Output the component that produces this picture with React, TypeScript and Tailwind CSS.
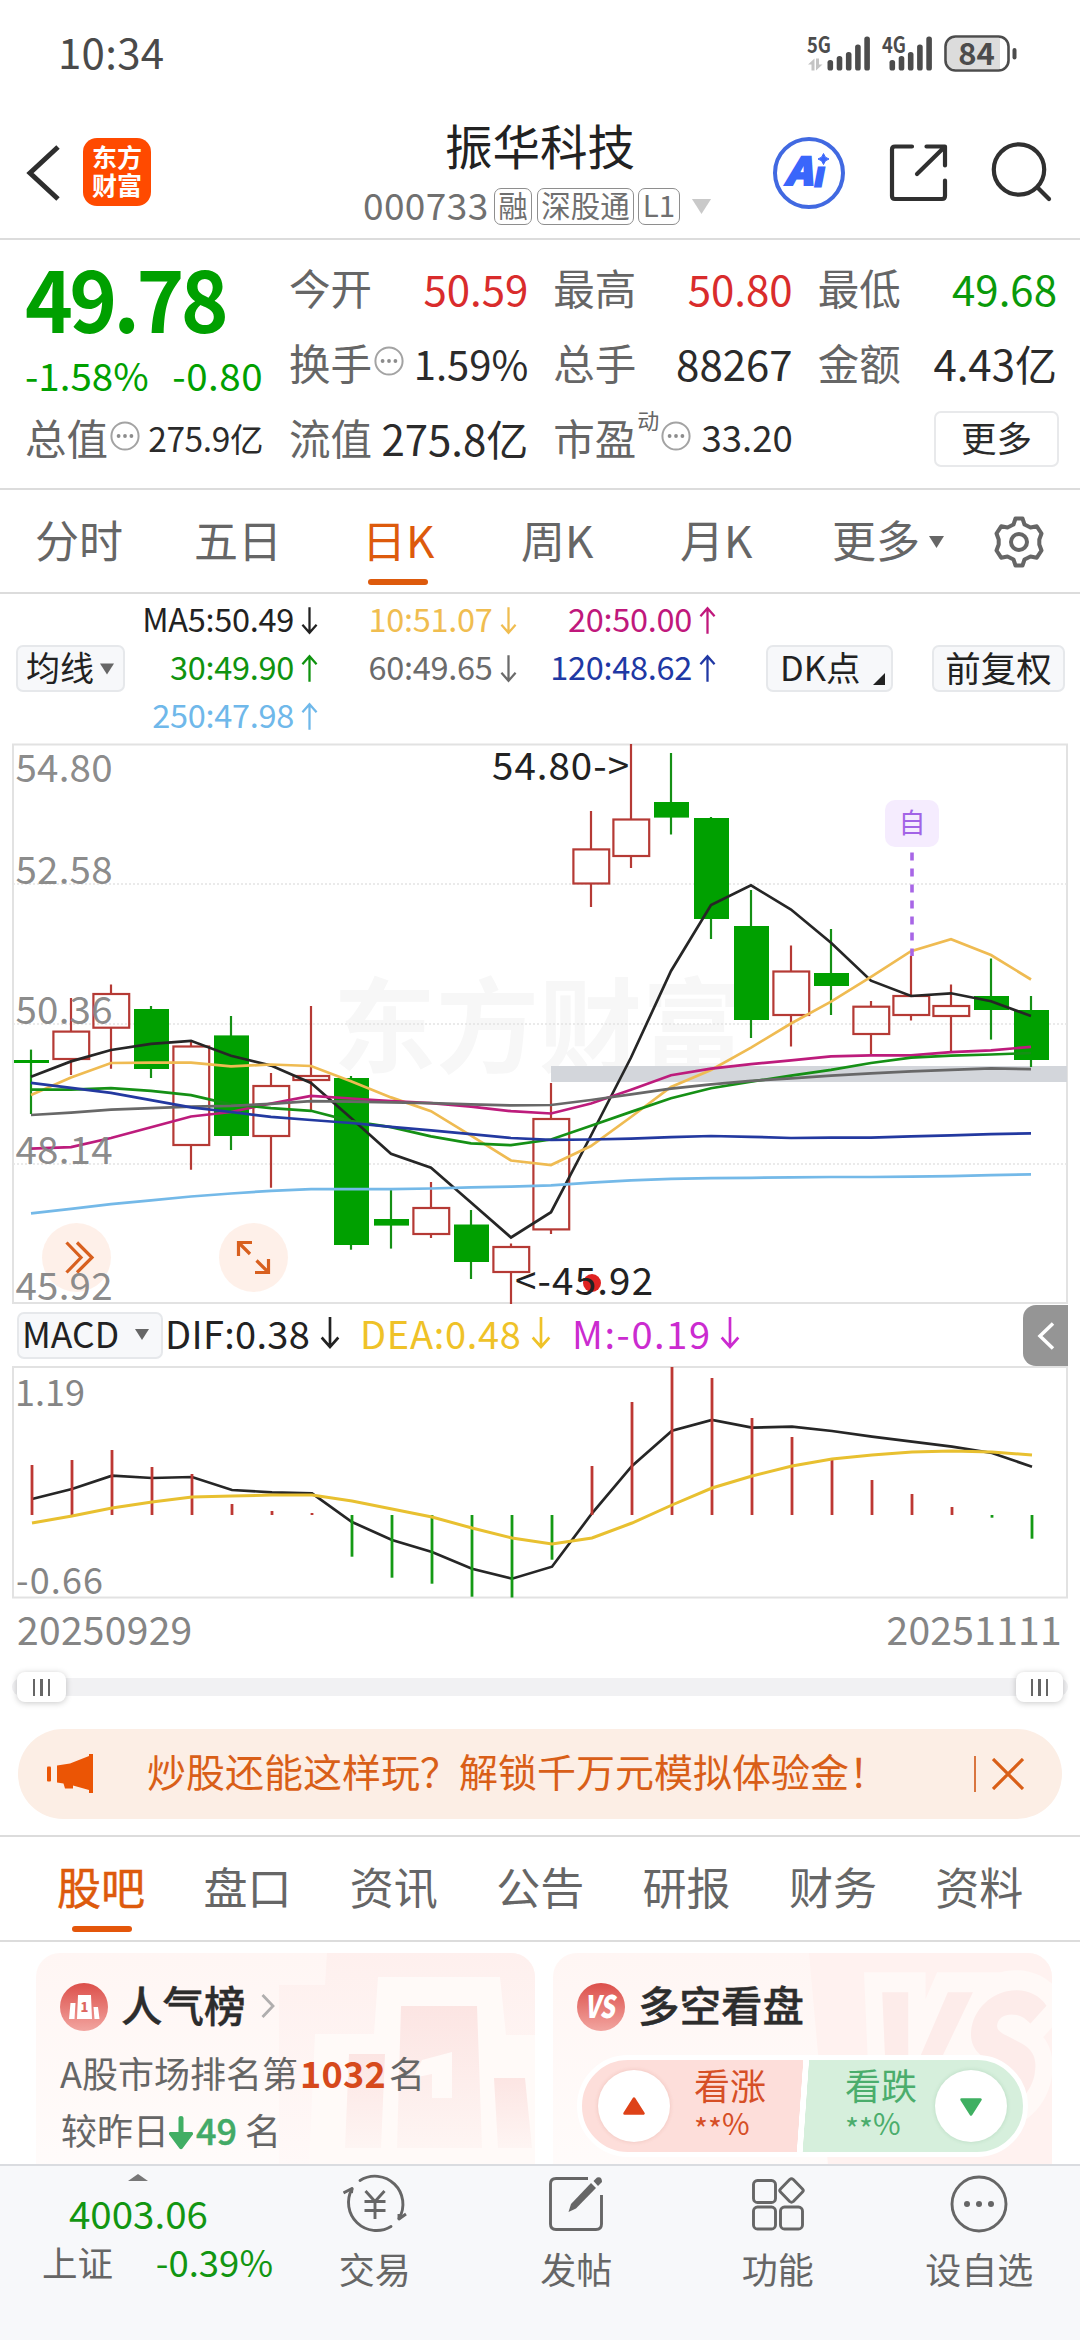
import React from "react";

const CJK = 'font-["Noto_Sans_CJK_SC",sans-serif]';

/* ---------- small shared pieces ---------- */

function Arrow({ dir, className = "" }: { dir: "up" | "down"; className?: string }) {
  return (
    <svg viewBox="0 0 18 30" className={`shrink-0 ${className}`} fill="none" stroke="currentColor" strokeWidth="2.4">
      {dir === "down" ? <path d="M9 1V28M1.5 19.5L9 28l7.5-8.5" /> : <path d="M9 29V2M1.5 10.5L9 2l7.5 8.5" />}
    </svg>
  );
}

function InfoDot({ className = "" }: { className?: string }) {
  return (
    <svg viewBox="0 0 30 30" className={`size-[30px] shrink-0 ${className}`} fill="none">
      <circle cx="15" cy="15" r="13.6" stroke="#a3a3a3" strokeWidth="2" />
      <circle cx="8.6" cy="15" r="1.9" fill="#8c8c8c" />
      <circle cx="15" cy="15" r="1.9" fill="#8c8c8c" />
      <circle cx="21.4" cy="15" r="1.9" fill="#8c8c8c" />
    </svg>
  );
}

function Caret({ className = "" }: { className?: string }) {
  return (
    <svg viewBox="0 0 14 11" className={`shrink-0 ${className}`}>
      <path d="M0 0H14L7 11Z" fill="currentColor" />
    </svg>
  );
}

/* ---------- status bar ---------- */

function Signal({ label, data }: { label: string; data?: boolean }) {
  const tops = [24, 20, 16, 8.5, 0.5];
  return (
    <svg viewBox="0 0 64 37" className="h-[37px] w-[64px] overflow-visible">
      {data && (
        <g fill="#c4c4c4">
          <path d="M0 28.5L6.5 22.500V34.500H3.500V28.500Z" />
          <path d="M14.500 28.500L8 34.500V22.500H11V28.500Z" />
        </g>
      )}
      {tops.map((t, i) => (
        <rect key={i} x={(data ? 19.5 : 6.5) + i * 9.2} y={t} width="5.600" height={34.5 - t} rx="2.6" fill="#4c4c4c" />
      ))}
      <text
        x="-1"
        y="17"
        fontSize="22"
        fontWeight="700"
        textLength="24"
        lengthAdjust="spacingAndGlyphs"
        fill="#4c4c4c"
        stroke="#fff"
        strokeWidth="3"
        paintOrder="stroke"
      >
        {label}
      </text>
    </svg>
  );
}

function StatusBar() {
  return (
    <div className="flex h-[110px] items-start text-[#4a4a4a]">
      <div className="mt-[30px] ml-[58px] text-[42px] leading-[42px] tracking-[0.300px]">10:34</div>
      <div className="mt-[36px] ml-auto flex w-[272px]">
        <div className="w-[75px]">
          <Signal label="5G" data />
        </div>
        <div className="w-[61px]">
          <Signal label="4G" />
        </div>
        <svg viewBox="0 0 74 38" className="mt-[-1px] h-[38px] w-[74px] overflow-visible">
          <rect x="1.500" y="1.500" width="63" height="34" rx="10" fill="#fff" />
          <path d="M11 3H56V34H11A8 8 0 0 1 3 26V11A8 8 0 0 1 11 3Z" fill="#dcdcdc" />
          <rect x="1.500" y="1.500" width="63" height="34" rx="10" fill="none" stroke="#4c4c4c" strokeWidth="2.600" />
          <rect x="68.500" y="13" width="4" height="11.500" rx="2" fill="#4c4c4c" />
          <text x="32.500" y="30" fontSize="31" fontWeight="700" textAnchor="middle" fill="#4c4c4c">
            84
          </text>
        </svg>
      </div>
    </div>
  );
}

/* ---------- header ---------- */

function Tag({ children, className }: { children: React.ReactNode; className: string }) {
  return (
    <span
      className={`flex h-[37px] items-center justify-center rounded-[7px] border-[1.5px] border-[#8e8e8e] pb-[4px] text-[29.500px] leading-none whitespace-nowrap ${className}`}
    >
      {children}
    </span>
  );
}

function Header() {
  return (
    <header className="flex h-[130px] border-b-2 border-[#dcdcdc]">
      <svg viewBox="0 0 34 56" className="mt-[35px] ml-[26px] h-[56px] w-[34px]" fill="none" stroke="#2e2e2e" strokeWidth="5">
        <path d="M32 2L4 28L32 54" />
      </svg>
      <div className="mt-[28px] ml-[23px] flex h-[68px] w-[68px] flex-col items-center justify-center rounded-[14px] bg-[#ff4a00] pb-[4px] text-[25px] leading-[28px] font-bold text-white">
        <span>东方</span>
        <span>财富</span>
      </div>
      <div className="ml-[212px] w-[350px]">
        <h1 className="mt-[9px] ml-[82px] text-[47.500px] leading-[52px] whitespace-nowrap text-[#222]">振华科技</h1>
        <div className="mt-[17px] flex h-[37px] items-center text-[#707070]">
          <span className="w-[131px] pb-[5px] text-[37px] leading-[32px] tracking-[0.400px]">000733</span>
          <Tag className="w-[38px]">融</Tag>
          <Tag className="ml-[5px] w-[97px]">深股通</Tag>
          <Tag className="ml-[4px] w-[42px]">L1</Tag>
          <Caret className="ml-[10px] h-[15px] w-[23px] text-[#c9c9c9]" />
        </div>
      </div>
      <svg viewBox="0 0 74 74" className="mt-[26px] ml-[59px] size-[74px] overflow-visible">
        <circle cx="37" cy="37" r="34" fill="none" stroke="#4169e1" strokeWidth="4" />
        <text x="13" y="49" fontSize="38" fontWeight="900" fontStyle="italic" textLength="27" lengthAdjust="spacingAndGlyphs" fill="#3a66fb" stroke="#3a66fb" strokeWidth="2">
          A
        </text>
        <text x="43" y="50" fontSize="34" fontWeight="900" fontStyle="italic" fill="#3a66fb" stroke="#3a66fb" strokeWidth="3">
          ı
        </text>
        <path d="M51.500 17.500Q52.500 22 57 23Q52.500 24 51.500 28.500Q50.500 24 46 23Q50.500 22 51.500 17.500Z" fill="#3a66fb" stroke="#3a66fb" />
      </svg>
      <svg
        viewBox="0 0 60 60"
        className="mt-[33px] ml-[42px] size-[60px]"
        fill="none"
        stroke="#303030"
        strokeWidth="4.200"
        strokeLinecap="round"
        strokeLinejoin="round"
      >
        <path d="M24 3.500H7Q4 3.500 4 6.500V53Q4 56 7 56H54Q57 56 57 53V37.500M38.500 3.500H57V22.500M56 4.500L29 31" />
      </svg>
      <svg viewBox="0 0 62 62" className="mt-[31px] ml-[43px] size-[62px]" fill="none" stroke="#303030" strokeWidth="4.200" strokeLinecap="round">
        <circle cx="28" cy="28.500" r="25.200" />
        <path d="M46.500 46.500L58 58" />
      </svg>
    </header>
  );
}

/* ---------- quote ---------- */

function Cell({ label, value, color = "text-[#2b2b2b]", size = "text-[42px]", info }: { label: string; value: string; color?: string; size?: string; info?: boolean }) {
  return (
    <div className="flex h-[75px] items-center">
      <span className="text-[41.500px] leading-none text-[#666]">{label}</span>
      {info && <InfoDot className="ml-[2px] mb-[3px]" />}
      <span className={`ml-auto leading-none ${size} ${color}`}>{value}</span>
    </div>
  );
}

function Quote() {
  return (
    <section className="flex h-[250px] border-b-2 border-[#dcdcdc]">
      <div className="ml-[25px] w-[238px] text-[#00a000]">
        <div className="flex h-[111px] origin-left scale-x-[0.944] items-center text-[86px] leading-none font-bold tracking-[-3.800px]">49.78</div>
        <div className="flex h-[47px] items-center justify-between text-[38.500px] leading-none">
          <span>-1.58%</span>
          <span className="tracking-[0.500px]">-0.80</span>
        </div>
        <div className="mt-[2px] flex h-[75px] items-center text-[#2b2b2b]">
          <span className="text-[41.500px] leading-none text-[#666]">总值</span>
          <InfoDot className="mb-[3px] ml-[2px]" />
          <span className="ml-auto text-[33.500px] leading-none tracking-[-0.400px]">275.9亿</span>
        </div>
      </div>
      <div className="ml-[26px] grid w-[768px] grid-cols-3 content-start gap-x-[25px] pt-[10px]">
        <Cell label="今开" value="50.59" color="text-[#d92c2c]" />
        <Cell label="最高" value="50.80" color="text-[#d92c2c]" />
        <Cell label="最低" value="49.68" color="text-[#0a9a0a]" />
        <Cell label="换手" value="1.59%" size="text-[40px]" info />
        <Cell label="总手" value="88267" />
        <Cell label="金额" value="4.43亿" />
        <Cell label="流值" value="275.8亿" />
        <div className="flex h-[75px] items-center">
          <span className="text-[41.500px] leading-none text-[#666]">市盈</span>
          <span className="mb-[38px] ml-px text-[22px] leading-none text-[#666]">动</span>
          <InfoDot className="mb-[3px] ml-[2px]" />
          <span className="ml-auto text-[36.500px] leading-none text-[#2b2b2b]">33.20</span>
        </div>
        <div className="flex h-[75px] items-center justify-end">
          <button className="mt-[2px] mr-[-2px] flex h-[56px] w-[125px] items-center justify-center rounded-[7px] border-2 border-[#e8e9eb] pb-[4px] text-[35.500px] leading-none text-[#2b2b2b]">更多</button>
        </div>
      </div>
    </section>
  );
}

/* ---------- period tabs ---------- */

function PeriodTabs() {
  return (
    <nav className="flex h-[104px] border-b-2 border-[#dcdcdc] text-[44px] leading-[98px] whitespace-nowrap text-[#666]">
      <span className="ml-[35px] w-[159px]">分时</span>
      <span className="w-[168px]">五日</span>
      <span className="flex w-[159px] flex-col text-[#dd5a0c]">
        <span className="h-[89px]">日K</span>
        <span className="ml-[6px] h-[6px] w-[60px] rounded-full bg-[#dd5a0c]" />
      </span>
      <span className="w-[159px]">周K</span>
      <span className="w-[152px]">月K</span>
      <span className="flex w-[161px]">
        更多
        <Caret className="mt-[46px] ml-[9px] h-[12px] w-[15px]" />
      </span>
      <svg viewBox="0 0 52 52" className="mt-[26px] size-[52px]" fill="none" stroke="#666" strokeWidth="4" strokeLinejoin="round">
        <path d="M22.500 2.500H29.500L31.500 8.500L37.500 11.500L43.800 10.300L48.500 17.500L46.300 23.500V28.500L48.500 34.500L43.800 41.700L37.500 40.500L31.500 43.500L29.500 49.500H22.500L20.500 43.500L14.500 40.500L8.200 41.700L3.500 34.500L5.700 28.500V23.500L3.500 17.500L8.200 10.300L14.500 11.500L20.500 8.500Z" />
        <circle cx="26" cy="26" r="8" />
      </svg>
    </nav>
  );
}

/* ---------- moving average legend ---------- */

function Ma({ text, dir, color }: { text: string; dir: "up" | "down"; color: string }) {
  return (
    <div className={`flex h-[48px] items-center justify-end ${color}`}>
      <span className="pb-[6px] text-[32.500px] leading-none tracking-[-0.300px] whitespace-nowrap">{text}</span>
      <Arrow dir={dir} className="mb-[2px] ml-[7px] h-[29px] w-[17px]" />
    </div>
  );
}

function MaLegend() {
  const box = "flex h-[47px] items-center rounded-[7px] border-2 border-[#e6e8eb] bg-[#f7f8fa] pb-[4px] leading-none whitespace-nowrap text-[#222]";
  return (
    <section className="flex h-[150px]">
      <div className={`mt-[51px] ml-[16px] w-[109px] pl-[8px] text-[34px] ${box}`}>
        均线
        <Caret className="mt-[4px] ml-[6px] h-[12px] w-[14px] text-[#666]" />
      </div>
      <div className="mt-[3px] grid w-[591px] grid-cols-[193px_198.500px_199.500px] content-start">
        <Ma text="MA5:50.49" dir="down" color="text-[#222]" />
        <Ma text="10:51.07" dir="down" color="text-[#f0bd50]" />
        <Ma text="20:50.00" dir="up" color="text-[#c0187c]" />
        <Ma text="30:49.90" dir="up" color="text-[#0f930f]" />
        <Ma text="60:49.65" dir="down" color="text-[#6b6b6b]" />
        <Ma text="120:48.62" dir="up" color="text-[#2038a4]" />
        <Ma text="250:47.98" dir="up" color="text-[#6fb8ea]" />
      </div>
      <div className={`mt-[51px] ml-[50px] w-[127px] pl-[12px] text-[34.500px] ${box}`}>
        DK点
        <svg viewBox="0 0 11 11" className="mt-[24px] ml-[12px] size-[12px]">
          <path d="M11 0V11H0Z" fill="#222" />
        </svg>
      </div>
      <div className={`mt-[51px] ml-[39px] w-[133px] justify-center text-[35.500px] ${box}`}>前复权</div>
    </section>
  );
}

/* ---------- K-line chart ---------- */

type Candle = [up: boolean, top: number, bottom: number, high: number, low: number];

const CANDLES: Candle[] = [
  [false, 1060, 1063, 1049.6, 1114],
  [true, 1031.6, 1059, 998, 1075],
  [true, 994, 1027.7, 984.5, 1068.7],
  [false, 1009, 1069, 1006, 1078],
  [true, 1046.5, 1145, 1042, 1169.7],
  [false, 1035.4, 1136, 1016, 1150],
  [true, 1086, 1136, 1073, 1187.7],
  [true, 1076, 1080, 1006, 1110.8],
  [false, 1078, 1245, 1076, 1249.7],
  [false, 1219, 1225.6, 1190, 1248.6],
  [true, 1208, 1234, 1182, 1238],
  [false, 1224.5, 1262, 1210, 1279],
  [true, 1247, 1272, 1243.6, 1304],
  [true, 1119, 1229.4, 1083, 1234],
  [true, 849.4, 883.5, 811, 907],
  [true, 819.5, 856, 744, 868],
  [false, 802, 817.6, 753, 834.5],
  [false, 818, 919, 817, 939],
  [false, 926, 1020, 890, 1038],
  [true, 971.5, 1015, 945.5, 1046.5],
  [false, 973, 986, 929, 1015],
  [true, 1006.7, 1034, 1001, 1055.7],
  [true, 996, 1015, 955.8, 1020.5],
  [true, 1006, 1016, 984.5, 1052],
  [false, 996, 1010, 958.5, 1039.6],
  [false, 1010, 1060, 996, 1067],
];

const AVERAGES: { color: string; y: number[] }[] = [
  { color: "#262626", y: [1076.7, 1061.4, 1050, 1043.8, 1040.8, 1055.7, 1065.6, 1082.9, 1118, 1153.7, 1167.8, 1202.6, 1237.5, 1212.2, 1135.5, 1057.5, 971, 905, 885.4, 909.5, 942.8, 980.7, 996, 993.3, 1001.3, 1016] },
  { color: "#efbb52", y: [1095, 1077.5, 1063, 1062.6, 1062.6, 1066.4, 1064.5, 1066, 1081.3, 1097.4, 1111.2, 1135.7, 1160.5, 1165, 1146, 1117, 1087, 1070, 1047.6, 1023.5, 1001.7, 976.8, 951.2, 939.3, 955, 979.5] },
  { color: "#bd1c7c", y: [1148.7, 1147.1, 1138, 1127.2, 1116.5, 1112, 1103.5, 1095.9, 1098.5, 1101.2, 1103.1, 1106.6, 1111.2, 1113.5, 1103.5, 1089.7, 1075.2, 1068.7, 1064.1, 1060.3, 1056.4, 1055.3, 1055.3, 1052.2, 1050.3, 1046.9] },
  { color: "#159015", y: [1089.7, 1089.7, 1088.2, 1090.9, 1095.1, 1104.3, 1108.1, 1110.8, 1121.1, 1127.2, 1136.4, 1143.3, 1145.2, 1139.5, 1125.7, 1111.9, 1098.2, 1088.2, 1081.7, 1075.6, 1069.8, 1063, 1057.6, 1055.7, 1054.5, 1053] },
  { color: "#686868", y: [1115, 1112.7, 1109.6, 1108.1, 1106.6, 1105.8, 1103.9, 1101.2, 1101.6, 1102.4, 1103.1, 1104.3, 1105.4, 1105, 1100, 1094.3, 1088.6, 1084.4, 1080.9, 1078.3, 1075.6, 1073.3, 1071.4, 1069.8, 1068.3, 1069.1] },
  { color: "#2339a0", y: [1082.9, 1087.8, 1092.8, 1100.1, 1107.3, 1112, 1116.9, 1120, 1123, 1126.9, 1130.3, 1134.1, 1138, 1139.9, 1139.5, 1138.7, 1137.2, 1136, 1136.8, 1138, 1137.6, 1137.6, 1136.4, 1135.3, 1134.1, 1133.4] },
  { color: "#74b9e8", y: [1213.4, 1208.8, 1204.2, 1200.3, 1196.5, 1193.5, 1190.8, 1189.2, 1189.2, 1189.2, 1188.5, 1187.3, 1186.6, 1185.4, 1182.7, 1180.4, 1178.9, 1178.2, 1177.8, 1177.4, 1177, 1177, 1176.6, 1176.2, 1175.1, 1174.3] },
];

const cx = (i: number) => 31 + i * 40;
const points = (ys: number[]) => ys.map((y, i) => `${cx(i)},${y}`).join(" ");

function KLine() {
  const axis: [string, number][] = [
    ["54.80", 782],
    ["52.58", 884],
    ["50.36", 1024],
    ["48.14", 1163.5],
    ["45.92", 1300],
  ];
  return (
    <svg viewBox="0 744 1080 561" className="block h-[561px] w-[1080px] overflow-visible">
      <text x="333" y="1065" fontSize="103" fontWeight="700" fill="#f7f7f7">
        东方财富
      </text>
      <rect x="13" y="744.500" width="1054" height="558.500" fill="none" stroke="#e2e2e2" strokeWidth="2" />
      {[884, 1024, 1164].map((y) => (
        <line key={y} x1="13" x2="1067" y1={y} y2={y} stroke="#e4e4e4" strokeWidth="1.500" strokeDasharray="2 2" />
      ))}
      <rect x="551" y="1066" width="516" height="16" fill="#d3d6db" />
      {CANDLES.map(([up, top, bottom, high, low], i) => {
        const x = cx(i);
        return up ? (
          <g key={i} stroke="#b53a35" strokeWidth="2.200" fill="none">
            <path d={`M${x} ${high}V${top}M${x} ${bottom}V${low}`} />
            <rect x={x - 17.6} y={top} width="35.800" height={bottom - top} />
          </g>
        ) : (
          <g key={i}>
            <path d={`M${x} ${high}V${low}`} stroke="#159015" strokeWidth="2.200" />
            <rect x={x - 17} y={top} width="35" height={bottom - top} fill="#00a000" />
          </g>
        );
      })}
      {AVERAGES.map((a) => (
        <polyline key={a.color} points={points(a.y)} fill="none" stroke={a.color} strokeWidth="2.700" />
      ))}
      <line x1="912" x2="912" y1="852.500" y2="956" stroke="#a866e6" strokeWidth="3.600" strokeDasharray="8 8" />
      <rect x="885" y="800" width="54" height="47" rx="10" fill="#f5ecfe" />
      <text x="912" y="833" fontSize="27" textAnchor="middle" fill="#a263e6">
        自
      </text>
      <circle cx="76.500" cy="1257.500" r="34.500" fill="#feefe7" fillOpacity="0.920" />
      <circle cx="253.500" cy="1257.500" r="34.500" fill="#feefe7" fillOpacity="0.920" />
      <g fill="none" stroke="#d8601f" strokeWidth="3.200">
        <path d="M66.500 1242.500L81 1257.500L66.500 1272.500M77 1242.500L92 1257.500L77 1272.500" />
        <path d="M238.500 1256V1242.500H252M239.500 1243.500L250 1254M268.500 1259V1272.500H255M267.500 1271.500L256.500 1260.500" />
      </g>
      {axis.map(([t, y]) => (
        <text key={t} x="15.500" y={y} fontSize="38.500" textLength="97" fill="#858585" fillOpacity="0.960">
          {t}
        </text>
      ))}
      <circle cx="592" cy="1283" r="9" fill="#df2222" />
      <text x="492" y="780" fontSize="38.500" fill="#222" textLength="137">
        {"54.80->"}
      </text>
      <text x="515" y="1295" fontSize="38.500" fill="#222" textLength="138">
        {"<-45.92"}
      </text>
    </svg>
  );
}

/* ---------- MACD ---------- */

const MACD_BARS = [1465, 1460, 1450, 1467, 1474, 1504, 1511, 1513, 1556.7, 1577.7, 1583.7, 1596.7, 1597.5, 1559.7, 1466, 1402, 1367, 1378, 1418, 1437, 1458, 1480, 1494, 1507, 1517.7, 1538.7];
const DIF = [1499, 1489, 1475.7, 1478, 1477, 1490, 1492.3, 1493.3, 1522, 1540, 1552, 1568.7, 1578.7, 1566.7, 1513.3, 1466, 1430.7, 1420, 1427.7, 1426.7, 1431, 1436.7, 1441.7, 1446.7, 1453, 1466.7];
const DEA = [1523, 1516, 1508, 1502, 1497, 1496, 1495, 1495, 1501, 1509, 1517, 1528, 1538, 1544, 1538, 1523, 1505, 1488, 1476, 1466, 1459, 1455, 1452, 1451, 1452, 1455];

function MacdHeader() {
  return (
    <div className="flex h-[61px] text-[38px] leading-none whitespace-nowrap">
      <div className="mt-[7px] ml-[17px] flex h-[47px] w-[146px] items-center rounded-[7px] border-2 border-[#e6e8eb] bg-[#f7f8fa] pb-[5px] pl-[3px] text-[35.500px] text-[#222]">
        MACD
        <Caret className="mt-[3px] ml-[16px] h-[13px] w-[14px] text-[#666]" />
      </div>
      <div className="flex h-[55px] w-[196px] items-center pl-[2px] text-[#222]">
        <span className="w-[155px] tracking-[0.300px]">DIF:0.38</span>
        <Arrow dir="down" className="h-[35px] w-[20px]" />
      </div>
      <div className="flex h-[55px] w-[213px] items-center pl-[1px] text-[#efc228]">
        <span className="w-[171px] tracking-[0.700px]">DEA:0.48</span>
        <Arrow dir="down" className="h-[35px] w-[20px]" />
      </div>
      <div className="flex h-[55px] items-center text-[#cb2bd0]">
        <span className="w-[148px] tracking-[1.600px]">M:-0.19</span>
        <Arrow dir="down" className="h-[35px] w-[20px]" />
      </div>
      <div className="ml-auto mr-[12px] flex h-[61px] w-[45px] items-center justify-center rounded-l-[13px] bg-[#959595]">
        <svg viewBox="0 0 18 28" className="h-[28px] w-[18px]" fill="none" stroke="#fff" strokeWidth="3.500">
          <path d="M16 1.500L3 14L16 26.500" />
        </svg>
      </div>
    </div>
  );
}

function Macd() {
  return (
    <svg viewBox="0 1366 1080 233" className="block h-[233px] w-[1080px]">
      <rect x="13" y="1367" width="1054" height="230.500" fill="none" stroke="#e2e2e2" strokeWidth="2" />
      <polyline points={points(DIF)} transform="translate(1 0)" fill="none" stroke="#262626" strokeWidth="2.700" />
      {MACD_BARS.map((y, i) => (
        <line key={i} x1={cx(i) + 1} x2={cx(i) + 1} y1="1515" y2={y} stroke={y < 1515 ? "#bd3833" : "#159a15"} strokeWidth="2.800" />
      ))}
      <polyline points={points(DEA)} transform="translate(1 0)" fill="none" stroke="#e8c030" strokeWidth="3" />
      <text x="15" y="1406" fontSize="36" fill="#858585">
        1.19
      </text>
      <text x="16" y="1593.500" fontSize="36" fill="#858585" textLength="87">
        -0.66
      </text>
    </svg>
  );
}

function Handle({ className }: { className: string }) {
  return (
    <div className={`flex h-[30px] items-center justify-center gap-[5px] rounded-[8px] bg-white shadow-[0_1px_6px_rgba(0,0,0,0.22)] ${className}`}>
      <i className="h-[17px] w-[2.500px] bg-[#666]" />
      <i className="h-[17px] w-[2.500px] bg-[#666]" />
      <i className="h-[17px] w-[2.500px] bg-[#666]" />
    </div>
  );
}

function Timeline() {
  return (
    <>
      <div className="flex h-[73px] justify-between pt-[7px] pr-[18px] pl-[17px] text-[39px] leading-[45px] tracking-[0.300px] text-[#858585]">
        <span>20250929</span>
        <span>20251111</span>
      </div>
      <div className="mx-[12px] mt-[6px] flex h-[18px] items-center justify-between rounded-full bg-[#f1f1f3] pr-[5px] pl-[5px]">
        <Handle className="w-[49px]" />
        <Handle className="w-[47px]" />
      </div>
    </>
  );
}

/* ---------- promo banner ---------- */

function Banner() {
  return (
    <div className="mx-[18px] mt-[33px] flex h-[90px] items-center rounded-full bg-[#fceee5] text-[#d95f18]">
      <svg viewBox="0 0 46 40" className="mt-[-2px] ml-[29px] h-[40px] w-[46px] shrink-0" fill="#eb5505">
        <rect x="0" y="13.500" width="4" height="15" rx="1" />
        <path d="M10 12.500L23 10.500L42 3V1H46V40H42V37L26 32.500V35.500H18L16.500 30.500L10 29.500Z" />
      </svg>
      <span className="ml-[54px] w-[827px] shrink-0 pb-[7px] text-[39px] leading-none whitespace-nowrap">炒股还能这样玩？解锁千万元模拟体验金！</span>
      <i className="h-[36px] w-[2px] shrink-0 bg-[#d9753f]" />
      <svg viewBox="0 0 32 32" className="ml-[16px] size-[32px] shrink-0" fill="none" stroke="#d95f18" strokeWidth="3.200">
        <path d="M1 1L31 31M31 1L1 31" />
      </svg>
    </div>
  );
}

/* ---------- section tabs ---------- */

function SectionTabs() {
  const tabs = ["股吧", "盘口", "资讯", "公告", "研报", "财务", "资料"];
  return (
    <nav className="mt-[16px] flex h-[107px] border-y-2 border-[#dcdcdc] pl-[57px] text-[44px] leading-[99px] text-[#666]">
      {tabs.map((t, i) => (
        <div key={t} className={`w-[146.400px] shrink-0 ${i === 0 ? "text-[#dd5a0c] [-webkit-text-stroke:0.5px_#dd5a0c]" : ""}`}>
          <div className="h-[89px]">{t}</div>
          {i === 0 && <div className="ml-[15px] h-[6px] w-[60px] rounded-full bg-[#e4560a]" />}
        </div>
      ))}
    </nav>
  );
}

/* ---------- cards ---------- */

function PopularCard() {
  return (
    <div className="relative h-[240px] w-[499px] overflow-hidden rounded-[24px] bg-linear-to-b from-[#fff6f4] to-[#fffcfb]">
      <svg viewBox="36 1953 499 212" className="absolute top-0 left-0 h-[212px] w-[499px]">
        <defs>
          <linearGradient id="podiumBack" x1="0" y1="0" x2="0" y2="1">
            <stop offset="0" stopColor="#fef0ee" />
            <stop offset="1" stopColor="#fff9f8" />
          </linearGradient>
          <linearGradient id="podium" x1="0" y1="0" x2="0" y2="1">
            <stop offset="0" stopColor="#fce5e3" />
            <stop offset="1" stopColor="#fef5f3" />
          </linearGradient>
        </defs>
        <path d="M327 1953H535V2165H279V1985H325Z" fill="url(#podiumBack)" />
        <path d="M378 1977H500L506 2035H535V2165H309L315 2034H374Z" fill="#fffaf8" />
        <path d="M401 2006H477L482 2148H397Z" fill="url(#podium)" />
        <path d="M349 2054H385L381 2148H345Z" fill="url(#podium)" />
        <path d="M494 2078H525L532 2148H498Z" fill="url(#podium)" />
        <path d="M422 2060L452 2052V2098H432V2074L413 2078Z" fill="#fffaf8" />
      </svg>
      <div className="relative text-[36px] leading-none whitespace-nowrap text-[#666]">
        <div className="flex h-[106px] items-center pl-[24px]">
          <svg viewBox="0 0 48 48" className="mt-[2px] size-[48px]">
            <defs>
              <linearGradient id="badgeA" x1="0" y1="0" x2="0" y2="1">
                <stop offset="0" stopColor="#dc4f4a" />
                <stop offset="1" stopColor="#f2a5a0" />
              </linearGradient>
            </defs>
            <circle cx="24" cy="24" r="24" fill="url(#badgeA)" />
            <path d="M18 12H31L32 36H17ZM10.500 20H15.500L14.500 36H9ZM33.500 24H38L39.500 36H34.500Z" fill="#fff" />
            <text x="24.500" y="29" fontSize="13" fontWeight="900" textAnchor="middle" fill="#dd6560">
              1
            </text>
          </svg>
          <span className="mb-[3px] ml-[13px] text-[41.500px] font-medium text-[#2d2d2d] [-webkit-text-stroke:0.4px_#2d2d2d]">人气榜</span>
          <svg viewBox="0 0 14 24" className="ml-[15px] h-[24px] w-[14px]" fill="none" stroke="#b0aeae" strokeWidth="2.800">
            <path d="M1.500 1L12 12L1.500 23" />
          </svg>
        </div>
        <div className="mt-[-11px] flex h-[48px] items-center pl-[24px]">
          A股市场排名第<b className="ml-[2px] tracking-[0.300px] text-[#d6491c]">1032</b>
          <span className="ml-[3px]">名</span>
        </div>
        <div className="mt-[9px] flex h-[48px] items-center pl-[25px]">
          较昨日
          <svg viewBox="0 0 24 34" className="mt-[8px] mr-[3px] h-[34px] w-[24px]" fill="#41ae64">
            <path d="M9.500 2Q9.500 0 12 0T14.500 2V16H23Q25 17 23.500 19L13.500 32.500Q12 34 10.500 32.500L0.500 19Q-1 17 1 16H9.500Z" />
          </svg>
          <span className="font-medium text-[#43aa67] [-webkit-text-stroke:0.4px_#43aa67]">49</span>
          <span className="ml-[8px]">名</span>
        </div>
      </div>
    </div>
  );
}

function VoteCard() {
  return (
    <div className="relative h-[240px] w-[499px] overflow-hidden rounded-[24px] bg-linear-to-b from-[#fff6f4] to-[#fffcfb]">
      <svg viewBox="553 1953 499 212" className="absolute top-0 left-0 h-[212px] w-[499px]">
        <path d="M809 1953H1052V2165H828Z" fill="#fff2f0" />
        <text
          x="858"
          y="2110"
          fontSize="158"
          fontWeight="900"
          fontStyle="italic"
          textLength="174"
          lengthAdjust="spacingAndGlyphs"
          fill="#fdecea"
          stroke="#fff9f7"
          strokeWidth="40"
          paintOrder="stroke"
        >
          VS
        </text>
      </svg>
      <div className="relative leading-none whitespace-nowrap">
        <div className="flex h-[106px] items-center pl-[24px]">
          <svg viewBox="0 0 48 48" className="mt-[2px] size-[48px]">
            <circle cx="24" cy="24" r="24" fill="url(#badgeA)" />
            <text x="22.500" y="35" fontSize="31" fontWeight="900" fontStyle="italic" textAnchor="middle" textLength="30" lengthAdjust="spacingAndGlyphs" fill="#fff">
              VS
            </text>
          </svg>
          <span className="mb-[3px] ml-[13px] text-[41.500px] font-medium text-[#2d2d2d] [-webkit-text-stroke:0.4px_#2d2d2d]">多空看盘</span>
        </div>
        <div className="mt-[-4px] ml-[24px] flex h-[102px] w-[451px] rounded-full border-[5px] border-white bg-[linear-gradient(94deg,#fddeda_49.400%,#fff_49.500%,#fff_50.700%,#d6efdc_50.800%)] text-[36px]">
          <div className="mt-[10px] ml-[16px] flex size-[72px] items-center justify-center rounded-full bg-white shadow-[0_0_4px_rgba(160,60,40,0.160)]">
            <svg viewBox="0 0 22 18" className="size-[22px]">
              <path d="M11 1.500L20.500 16.500H1.500Z" fill="#de4218" stroke="#de4218" strokeWidth="2.500" strokeLinejoin="round" />
            </svg>
          </div>
          <div className="ml-[24px] w-[151px] pt-[6px] text-[#d64f26]">
            <div>看涨</div>
            <div className="mt-[5px] flex text-[30px]">
              <span className="translate-y-[6px]">**</span>%
            </div>
          </div>
          <div className="w-[90px] pt-[6px] text-[#4bad6c]">
            <div>看跌</div>
            <div className="mt-[5px] flex text-[30px]">
              <span className="translate-y-[6px]">**</span>%
            </div>
          </div>
          <div className="mt-[10px] flex size-[72px] items-center justify-center rounded-full bg-white shadow-[0_0_4px_rgba(40,120,60,0.160)]">
            <svg viewBox="0 0 22 18" className="mt-[2px] size-[22px]">
              <path d="M11 16.500L20.500 1.500H1.500Z" fill="#3fb062" stroke="#3fb062" strokeWidth="2.500" strokeLinejoin="round" />
            </svg>
          </div>
        </div>
      </div>
    </div>
  );
}

/* ---------- bottom bar ---------- */

function NavItem({ label, children }: { label: string; children: React.ReactNode }) {
  return (
    <div className="flex w-[201.500px] flex-col items-center">
      <svg viewBox="-32 -32 64 64" className="mt-[6px] size-[64px]" fill="none" stroke="#666" strokeWidth="2.900" strokeLinejoin="round">
        {children}
      </svg>
      <span className="mt-[12px] text-[36px] leading-[40px] text-[#666]">{label}</span>
    </div>
  );
}

function BottomBar() {
  return (
    <footer className="relative flex h-[176px] border-t-2 border-[#dadce0] bg-[#f7f8fa]">
      <div className="flex w-[274px] flex-col leading-none">
        <svg viewBox="0 0 20 7" className="mt-[8px] ml-[128px] h-[7px] w-[20px]">
          <path d="M0 7L10 0L20 7Z" fill="#777" />
        </svg>
        <span className="mt-[12px] ml-[69px] text-[38.500px] text-[#129612]">4003.06</span>
        <div className="mt-[12px] ml-[42px] flex w-[231px] items-center justify-between text-[35.500px]">
          <span className="text-[#666]">上证</span>
          <span className="text-[36.500px] text-[#129612]">-0.39%</span>
        </div>
      </div>
      <NavItem label="交易">
        <path d="M-15 -23.500A28 28 0 0 1 24 14.500M16 22.500A28 28 0 0 1 -23 -15" strokeLinecap="round" />
        <path d="M-31.500 -11L-23 -15.500L-23.500 -11M31 10L24 15V10" />
        <path d="M-9.500 -13L0 -2.500L9.500 -13M0 -2.500V15M-10.500 -2.500H10.500M-10.500 6.500H10.500" />
      </NavItem>
      <NavItem label="发帖">
        <path d="M12 -25.500H-20Q-25.500 -25.500 -25.500 -20V20Q-25.500 25.500 -20 25.500H20Q25.500 25.500 25.500 20V-9" />
        <path d="M-7.500 8L-5 0L15 -21L20 -16L0 4.500Z" fill="#666" stroke="none" />
        <path d="M17.500 -23L21 -26.500Q26 -28 26 -22L22 -18Z" fill="#666" stroke="none" />
      </NavItem>
      <NavItem label="功能">
        <rect x="-24.500" y="-23.500" width="22" height="22" rx="4" />
        <rect x="-24.500" y="3" width="22" height="22" rx="4" />
        <rect x="2.500" y="3" width="22" height="22" rx="4" />
        <path d="M11.700 -24.500Q13.500 -26 15.300 -24.500L24.500 -15Q26 -13.500 24.500 -12L15.300 -2.500Q13.500 -1 11.700 -2.500L2.500 -12Q1 -13.500 2.500 -15Z" />
      </NavItem>
      <NavItem label="设自选">
        <circle r="27" />
        <g fill="#666" stroke="none">
          <circle cx="-12" r="3" />
          <circle r="3" />
          <circle cx="12" r="3" />
        </g>
      </NavItem>
    </footer>
  );
}

export default function App() {
  return (
    <div className={`h-[2340px] w-[1080px] overflow-hidden bg-white ${CJK}`}>
      <StatusBar />
      <Header />
      <Quote />
      <PeriodTabs />
      <MaLegend />
      <KLine />
      <MacdHeader />
      <Macd />
      <Timeline />
      <Banner />
      <SectionTabs />
      <div className="flex h-[222px] gap-[18px] overflow-hidden pt-[11px] pl-[36px]">
        <PopularCard />
        <VoteCard />
      </div>
      <BottomBar />
    </div>
  );
}
